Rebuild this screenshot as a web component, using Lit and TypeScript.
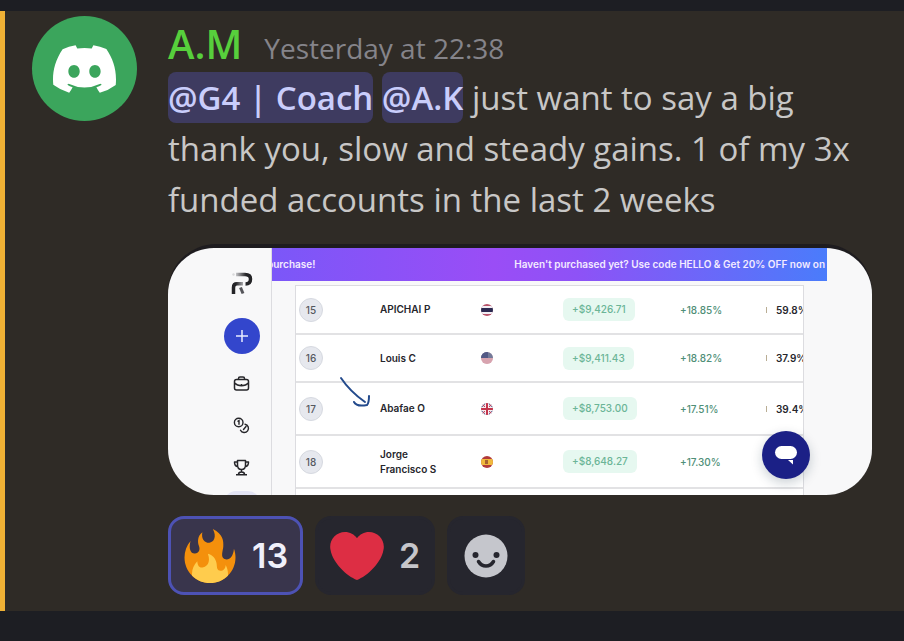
import { LitElement, html, svg, css } from "lit";
import { customElement } from "lit/decorators.js";

interface Trader {
  rank: number;
  name: string;
  country: string;
  flag: unknown;
  profit: string;
  gain: string;
  rate: string;
}

const thailand = svg`
  <rect width="12" height="12" fill="#b8546a"/>
  <rect y="2" width="12" height="8" fill="#f1eef4"/>
  <rect y="4" width="12" height="4" fill="#2b2950"/>`;

const usa = svg`
  <rect width="12" height="12" fill="#e6c3cb"/>
  <path d="M0 7h12M0 9h12M0 11h12" stroke="#c98493" stroke-width="1"/>
  <rect width="12" height="6" fill="#737a99"/>
  <rect width="7" height="6" fill="#535a86"/>`;

const uk = svg`
  <rect width="12" height="12" fill="#6d6a94"/>
  <path d="M0 0L12 12M12 0L0 12" stroke="#f3dfe4" stroke-width="2"/>
  <path d="M0 0L12 12M12 0L0 12" stroke="#c2455a" stroke-width="1"/>
  <path d="M6 0V12M0 6H12" stroke="#f8eef0" stroke-width="4"/>
  <path d="M6 0V12M0 6H12" stroke="#c2354c" stroke-width="2"/>`;

const spain = svg`
  <rect width="12" height="12" fill="#b23a3a"/>
  <rect y="3" width="12" height="6" fill="#f0b93c"/>
  <rect x="4" y="4" width="3" height="4" fill="#a8632f"/>`;

const traders: Trader[] = [
  { rank: 15, name: "APICHAI P", country: "Thailand", flag: thailand, profit: "+$9,426.71", gain: "+18.85%", rate: "59.8%" },
  { rank: 16, name: "Louis C", country: "United States", flag: usa, profit: "+$9,411.43", gain: "+18.82%", rate: "37.9%" },
  { rank: 17, name: "Abafae O", country: "United Kingdom", flag: uk, profit: "+$8,753.00", gain: "+17.51%", rate: "39.4%" },
  { rank: 18, name: "Jorge Francisco S", country: "Spain", flag: spain, profit: "+$8,648.27", gain: "+17.30%", rate: "" },
];

@customElement("leaderboard-card")
export class LeaderboardCard extends LitElement {
  static styles = css`
    :host {
      display: block;
      font-family: Inter, sans-serif;
      font-size: 10px;
      color: #26262c;
    }
    .frame {
      padding-top: 4px;
      border-radius: 48px;
      background: #1e1c1f;
    }
    .shot {
      position: relative;
      display: flex;
      height: 247px;
      border-radius: 46px;
      overflow: hidden;
      background: #f8f8f9;
    }
    .rail {
      box-sizing: border-box;
      flex: none;
      width: 104px;
      padding: 22px 0 0 44px;
      border-right: 1px solid #dcdce0;
      display: flex;
      flex-direction: column;
      align-items: center;
    }
    .logo {
      flex: none;
    }
    .rail button {
      display: grid;
      place-items: center;
      flex: none;
      width: 36px;
      height: 36px;
      margin-bottom: 6px;
      padding: 0;
      border: 0;
      background: none;
      color: #26262a;
    }
    .rail .add {
      margin: 22px 0 11px;
      border-radius: 50%;
      background: #3346cc;
    }
    .rail .active {
      border-radius: 12px;
      background: #e3e4f4;
    }
    .main {
      flex: 1;
      min-width: 0;
    }
    .banner {
      display: flex;
      justify-content: space-between;
      margin-right: 45px;
      line-height: 33px;
      font-weight: 600;
      color: #f3ebff;
      white-space: nowrap;
      overflow: hidden;
      background: linear-gradient(90deg, #7b57f8, #9a4df6 40%, #8e52f6 55%, #4a7cfb);
    }
    .banner span:first-child {
      margin-left: -5px;
    }
    .banner span:last-child {
      margin-right: 2px;
    }
    .sheet {
      margin: 4px 68px 0 23px;
      border: 1px solid #dcdce0;
      background: #fff;
      overflow: hidden;
    }
    table {
      width: 100%;
      table-layout: fixed;
      border-collapse: collapse;
    }
    td {
      box-sizing: border-box;
      height: 48px;
      padding: 0;
      border-bottom: 2px solid #e2e2e4;
      white-space: nowrap;
    }
    .tall td {
      height: 53px;
    }
    .c-rank { width: 84px; }
    .c-name { width: 101px; }
    .c-flag { width: 82px; }
    .c-profit { width: 117px; }
    .c-gain { width: 86px; }
    .rank {
      box-sizing: border-box;
      display: grid;
      place-items: center;
      width: 24px;
      height: 24px;
      margin-left: 3px;
      border: 1px solid #d6d9e0;
      border-radius: 50%;
      background: #e6e8ee;
      color: #55585f;
      font-weight: 500;
    }
    .name {
      display: block;
      width: 66px;
      line-height: 15px;
      font-weight: 600;
      white-space: normal;
    }
    .flag {
      display: block;
    }
    .profit {
      display: inline-block;
      padding: 0 9px;
      border-radius: 6px;
      background: #e6f8f0;
      color: #6bb597;
      line-height: 23px;
      font-weight: 500;
    }
    .gain {
      color: #4f8f78;
      font-weight: 500;
    }
    .rate {
      display: flex;
      align-items: center;
      gap: 9px;
      font-weight: 600;
    }
    .tick {
      flex: none;
      width: 1px;
      height: 6px;
      background: #b9ad94;
    }
    .arrow {
      position: absolute;
      left: 170px;
      top: 126px;
    }
    .chat {
      position: absolute;
      right: 62px;
      bottom: 16px;
      display: grid;
      place-items: center;
      width: 48px;
      height: 48px;
      padding: 0;
      border: 0;
      border-radius: 50%;
      background: #1b2086;
      box-shadow: 0 4px 12px #0e2a3a38;
    }
  `;

  render() {
    return html`
      <div class="frame">
        <div class="shot">
          <nav class="rail" aria-label="Dashboard">
            <svg class="logo" width="22" height="26" viewBox="0 0 22 26" fill="none">
              <defs>
                <linearGradient id="fade" gradientUnits="userSpaceOnUse" x1="4" x2="15" y1="0" y2="0">
                  <stop offset="0" stop-color="#d5d5d8"/>
                  <stop offset="1" stop-color="#242427"/>
                </linearGradient>
                <linearGradient id="fade2" gradientUnits="userSpaceOnUse" x1="13" x2="5" y1="0" y2="0">
                  <stop offset="0" stop-color="#bcbcbf"/>
                  <stop offset="1" stop-color="#242427"/>
                </linearGradient>
              </defs>
              <path d="M5 4.500H14C18 4.500 19.500 6 19.500 9C19.500 12.500 18 14 14.500 14" stroke="url(#fade)" stroke-width="3.500"/>
              <path d="M2.500 24V17.500C2.500 15 4 13.800 6 13.800H12" stroke="url(#fade2)" stroke-width="3.500"/>
              <path d="M9.500 17.500L12 23.500" stroke="#55555a" stroke-width="3"/>
              <circle cx="2.500" cy="4.500" r="1.200" fill="#d8d8da"/>
            </svg>
            <button class="add" aria-label="Add">
              <svg width="14" height="14" viewBox="0 0 14 14" stroke="#e8ebff" stroke-width="1.500"><path d="M7 1V13M1 7H13"/></svg>
            </button>
            <button aria-label="Accounts">
              <svg width="17" height="17" viewBox="0 0 17 17" fill="none" stroke="currentColor" stroke-width="1.500" stroke-linejoin="round">
                <rect x="1.500" y="4.500" width="14" height="10.500" rx="2"/>
                <path d="M5.500 4.500V3.500C5.500 2.500 6 2 7 2H10C11 2 11.500 2.500 11.500 3.500V4.500M1.500 8C5 11.500 12 11.500 15.500 8M8.500 9V11"/>
              </svg>
            </button>
            <button aria-label="Payouts">
              <svg width="17" height="17" viewBox="0 0 17 17" fill="none" stroke="currentColor" stroke-width="1.400" stroke-linecap="round">
                <circle cx="5.700" cy="5.500" r="4.300"/>
                <path d="M5 4.200L6 3.700V7.200M12 7.200A4.200 4.200 0 1 1 7.500 13.200M13 9.500L10.500 12.500"/>
              </svg>
            </button>
            <button aria-label="Leaderboard">
              <svg width="17" height="17" viewBox="0 0 17 17" fill="none" stroke="currentColor" stroke-width="1.500" stroke-linejoin="round">
                <path d="M4.500 1.500H12.500V6C12.500 9 11 10.500 8.500 10.500S4.500 9 4.500 6ZM4.500 3H1.500C1.500 6 2.500 7.500 5 7.700M12.500 3H15.500C15.500 6 14.500 7.500 12 7.700M8.500 10.500V13M5.500 15.500C5.500 13.500 6.500 13 8.500 13S11.500 13.500 11.500 15.500M3 15.700H14"/>
              </svg>
            </button>
            <button class="active" aria-label="Community"></button>
          </nav>
          <div class="main">
            <div class="banner">
              <span>purchase!</span>
              <span>Haven't purchased yet? Use code HELLO &amp; Get 20% OFF now on</span>
            </div>
            <div class="sheet">
              <table aria-label="Leaderboard">
                <colgroup>
                  <col class="c-rank"><col class="c-name"><col class="c-flag"><col class="c-profit"><col class="c-gain"><col>
                </colgroup>
                <tbody>
                  ${traders.map(
                    (t) => html`
                      <tr class=${t.rank > 16 ? "tall" : ""}>
                        <td><span class="rank">${t.rank}</span></td>
                        <td><span class="name">${t.name}</span></td>
                        <td>
                          <svg class="flag" width="12" height="12" viewBox="0 0 12 12" role="img" aria-label=${t.country}>
                            <clipPath id="round"><circle cx="6" cy="6" r="6"/></clipPath>
                            <g clip-path="url(#round)">${t.flag}</g>
                          </svg>
                        </td>
                        <td><span class="profit">${t.profit}</span></td>
                        <td class="gain">${t.gain}</td>
                        <td>${t.rate ? html`<span class="rate"><i class="tick"></i>${t.rate}</span>` : ""}</td>
                      </tr>
                    `
                  )}
                  <tr><td colspan="6"></td></tr>
                </tbody>
              </table>
            </div>
          </div>
          <svg class="arrow" width="34" height="36" viewBox="0 0 34 36" fill="none" stroke="#234a8c" stroke-width="2" stroke-linecap="round" stroke-linejoin="round">
            <path d="M3 4C9 13 17 21 27 28M16 28C18 32 24 32 29 31C31 29 31 26 31 22"/>
          </svg>
          <button class="chat" aria-label="Open chat">
            <svg width="24" height="20" viewBox="0 0 24 20" fill="#fff">
              <rect x="1" y="1" width="22" height="13" rx="6.500"/>
              <path d="M14 15H19V19.500Z"/>
            </svg>
          </button>
        </div>
      </div>
    `;
  }
}

@customElement("app-root")
export class AppRoot extends LitElement {
  static styles = css`
    :host {
      display: block;
      min-height: 100vh;
      padding-top: 11px;
      box-sizing: border-box;
      background: #1d1e23;
      font-family: "Open Sans", "Noto Sans", sans-serif;
      color: #c8c7c6;
    }
    .message {
      display: flex;
      gap: 31px;
      padding: 5px 32px 16px 27px;
      border-left: 5px solid #efb135;
      background: #2f2b26;
    }
    .avatar {
      flex: none;
      display: grid;
      place-items: center;
      width: 105px;
      height: 105px;
      border-radius: 50%;
      background: #3ba55c;
    }
    .body {
      flex: 1;
      min-width: 0;
    }
    .head {
      display: flex;
      align-items: baseline;
      gap: 22px;
      padding-top: 4px;
      line-height: 47px;
    }
    .author {
      font-size: 40px;
      font-weight: 600;
      color: #57cf3c;
    }
    time {
      font-size: 28px;
      font-weight: 500;
      color: #85848a;
    }
    p {
      margin: 0;
      font-size: 33px;
      line-height: 51px;
      font-weight: 500;
    }
    .mention {
      display: inline-block;
      border-radius: 8px;
      background: #3e3b60;
      color: #c9cdfb;
      font-weight: 600;
      text-decoration: none;
    }
    leaderboard-card {
      margin-top: 19px;
    }
    .reactions {
      display: flex;
      flex-wrap: wrap;
      gap: 12px;
      margin-top: 21px;
    }
    .reaction {
      box-sizing: border-box;
      display: flex;
      align-items: center;
      justify-content: center;
      gap: 15px;
      height: 79px;
      padding: 0 12px;
      border: 3px solid #26262e;
      border-radius: 16px;
      background: #26262e;
      color: #c6c6cb;
      font-family: Inter, sans-serif;
      font-size: 34px;
      font-weight: 600;
    }
    .mine {
      border-color: #4d52b4;
      background: #39354c;
      color: #f0f0fb;
    }
    .smile {
      padding: 0 14px;
    }
  `;

  render() {
    return html`
      <article class="message">
        <div class="avatar">
          <svg width="63" height="48" viewBox="0 0 127.14 96.36" fill="#fff" role="img" aria-label="Avatar">
            <path d="M107.7,8.07A105.15,105.15,0,0,0,81.47,0a72.06,72.06,0,0,0-3.36,6.83A97.68,97.68,0,0,0,49,6.83,72.37,72.37,0,0,0,45.64,0,105.89,105.89,0,0,0,19.39,8.09C2.79,32.65-1.71,56.6.54,80.21h0A105.73,105.73,0,0,0,32.71,96.36,77.7,77.7,0,0,0,39.6,85.25a68.42,68.42,0,0,1-10.85-5.18c.91-.66,1.8-1.34,2.66-2a75.57,75.57,0,0,0,64.32,0c.87.71,1.76,1.39,2.66,2a68.68,68.68,0,0,1-10.87,5.19,77,77,0,0,0,6.89,11.1A105.25,105.25,0,0,0,126.6,80.22h0C129.24,52.84,122.09,29.11,107.7,8.07ZM42.45,65.69C36.18,65.69,31,60,31,53s5-12.74,11.43-12.74S54,46,53.89,53,48.84,65.69,42.45,65.69Zm42.24,0C78.41,65.69,73.25,60,73.25,53s5-12.74,11.44-12.74S96.23,46,96.12,53,91.08,65.69,84.69,65.69Z"/>
          </svg>
        </div>
        <div class="body">
          <header class="head">
            <span class="author">A.M</span>
            <time>Yesterday at 22:38</time>
          </header>
          <p>
            <a class="mention" href="#coach">@G4 | Coach</a> <a class="mention" href="#ak">@A.K</a> just want to say a big<br>
            thank you, slow and steady gains. 1 of my 3x<br>
            funded accounts in the last 2 weeks
          </p>
          <leaderboard-card></leaderboard-card>
          <div class="reactions">
            <button class="reaction mine" aria-label="Fire, 13 reactions">
              <svg width="54" height="54" viewBox="0 0 36 36">
                <path fill="#f4900c" d="M35 19c0-2.062-.367-4.039-1.04-5.868-.46 5.389-3.333 8.157-6.335 6.868-2.812-1.208-.917-5.917-.777-8.164.236-3.809-.012-8.169-6.931-11.794 2.875 5.500.333 8.917-2.333 9.125-2.958.231-5.667-2.542-4.667-7.042-3.238 2.386-3.332 6.402-2.333 9 1.042 2.708-.042 4.958-2.583 5.208-2.840.280-4.418-3.041-2.963-8.333C2.520 10.965 1 14.805 1 19c0 9.389 7.611 17 17 17s17-7.611 17-17z"/>
                <path fill="#ffcc4d" d="M28.394 23.999c.148 3.084-2.561 4.293-4.019 3.709-2.106-.843-1.541-2.291-2.083-5.291s-2.625-5.083-5.708-6c2.250 6.333-1.247 8.667-3.080 9.084-1.872.426-3.753-.001-3.968-4.007C7.352 23.668 6 26.676 6 30c0 .368.023.730.055 1.090C9.125 34.124 13.342 36 18 36s8.875-1.876 11.945-4.910c.032-.360.055-.722.055-1.090 0-2.187-.584-4.236-1.606-6.001z"/>
              </svg>
              <span>13</span>
            </button>
            <button class="reaction" aria-label="Heart, 2 reactions">
              <svg width="54" height="54" viewBox="0 0 36 36">
                <path fill="#dd2e44" d="M35.885 11.833c0-5.450-4.418-9.868-9.867-9.868-3.308 0-6.227 1.633-8.018 4.129-1.791-2.496-4.710-4.129-8.017-4.129-5.450 0-9.868 4.417-9.868 9.868 0 .772.098 1.520.266 2.241C1.751 22.587 11.216 31.568 18 34.034c6.783-2.466 16.249-11.447 17.617-19.959.170-.721.268-1.469.268-2.242z"/>
              </svg>
              <span>2</span>
            </button>
            <button class="reaction smile" aria-label="Add reaction">
              <svg width="44" height="44" viewBox="0 0 44 44">
                <circle cx="22" cy="22" r="21.500" fill="#c5c6cc"/>
                <circle cx="11.500" cy="21" r="3" fill="#26262e"/>
                <circle cx="32.500" cy="21" r="3" fill="#26262e"/>
                <path d="M14.500 27.500C18 33.500 26 33.500 29.500 27.500" fill="none" stroke="#26262e" stroke-width="3.500" stroke-linecap="round"/>
              </svg>
            </button>
          </div>
        </div>
      </article>
    `;
  }
}
